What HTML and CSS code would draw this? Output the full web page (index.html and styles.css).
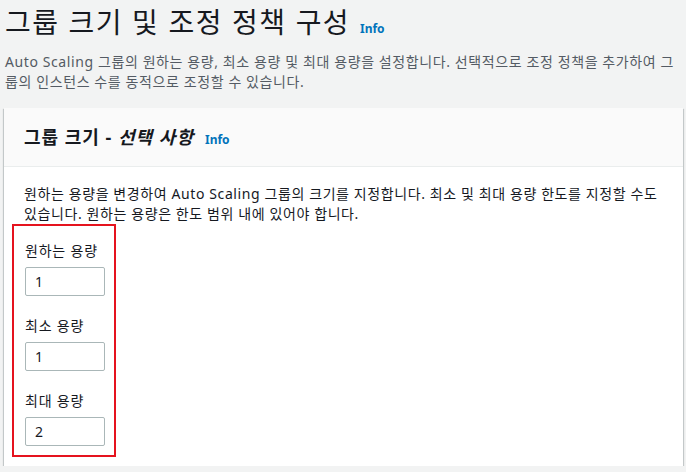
FILE: index.html
```html
<!DOCTYPE html>
<html lang="ko">
<head>
  <meta charset="UTF-8" />
  <meta name="viewport" content="width=device-width, initial-scale=1.0"/>
  <title>그룹 크기 및 조정 정책 구성</title>
  <link rel="stylesheet" href="styles.css">
</head>
<body>

  <div class="page">
    <h1 class="title"><span>그룹 크기 및 조정 정책 구성</span> <a class="info" href="#">Info</a></h1>
    <p class="intro">Auto Scaling 그룹의 원하는 용량, 최소 용량 및 최대 용량을 설정합니다. 선택적으로 조정 정책을 추가하여 그룹의 인스턴스 수를 동적으로 조정할 수 있습니다.</p>

    <div class="card">
      <div class="card-head">
        <h2><span>그룹 크기 - <i>선택 사항</i></span> <a class="info" href="#">Info</a></h2>
      </div>
      <div class="card-body">
        <p>원하는 용량을 변경하여 Auto Scaling 그룹의 크기를 지정합니다. 최소 및 최대 용량 한도를 지정할 수도 있습니다. 원하는 용량은 한도 범위 내에 있어야 합니다.</p>

        <div class="highlight">
          <label class="field">원하는 용량
            <input type="text" value="1">
          </label>
          <label class="field">최소 용량
            <input type="text" value="1">
          </label>
          <label class="field">최대 용량
            <input type="text" value="2">
          </label>
        </div>
      </div>
    </div>
  </div>

</body>
</html>
```

FILE: styles.css
```css
*, *::before, *::after {
  box-sizing: border-box;
}

* {
  margin: 0;
}

body {
  background: #f2f3f3;
  color: #16191f;
  font-family: "Noto Sans", "Noto Sans CJK KR", sans-serif;
  font-size: 14px;
  line-height: 20px;
  letter-spacing: 0.6px;
  -webkit-font-smoothing: antialiased;
}

input {
  font: inherit;
}

.page {
  padding: 3px 3px 0 4px;
}

.title {
  display: flex;
  align-items: baseline;
  gap: 10px;
  font-family: "Noto Sans CJK KR", sans-serif;
  font-size: 28px;
  line-height: 36px;
  font-weight: 400;
  letter-spacing: 1.4px;
  padding-left: 1px;
}

.info {
  font-family: "Noto Sans", sans-serif;
  font-size: 12px;
  line-height: 20px;
  font-weight: 700;
  letter-spacing: 0;
  color: #0073bb;
  text-decoration: none;
}

.intro {
  color: #545b64;
  margin-top: 13px;
  padding-left: 1px;
}

.card {
  margin-top: 16px;
  background: #fff;
  box-shadow: 0 1px 1px 0 rgba(0, 28, 36, 0.3),
              1px 1px 1px 0 rgba(0, 28, 36, 0.15),
              -1px 1px 1px 0 rgba(0, 28, 36, 0.15);
}

.card-head {
  background: #fafafa;
  border-bottom: 1px solid #eaeded;
  height: 59px;
  padding: 0 20px;
  display: flex;
  align-items: center;
}

.card-head h2 {
  display: flex;
  align-items: baseline;
  gap: 11px;
  font-size: 18px;
  line-height: 24px;
  font-weight: 700;
  letter-spacing: 1px;
}

.card-head h2 i {
  font-style: italic;
}

.card-body {
  padding: 15px 20px 9px 20px;
}

.card-body p {
  padding-top: 2px;
}

.highlight {
  margin-left: -12px;
  width: 104px;
  border: 2px solid #e5131e;
  padding: 15px 0 9px 11px;
  display: flex;
  flex-direction: column;
  gap: 20px;
}

.field {
  display: flex;
  flex-direction: column;
  gap: 6px;
  letter-spacing: 0.8px;
}

.field input {
  width: 80px;
  height: 29px;
  border: 1px solid #aab7b8;
  border-radius: 2px;
  padding: 0 9px;
  color: #16191f;
  letter-spacing: 0;
  outline: none;
}
```
